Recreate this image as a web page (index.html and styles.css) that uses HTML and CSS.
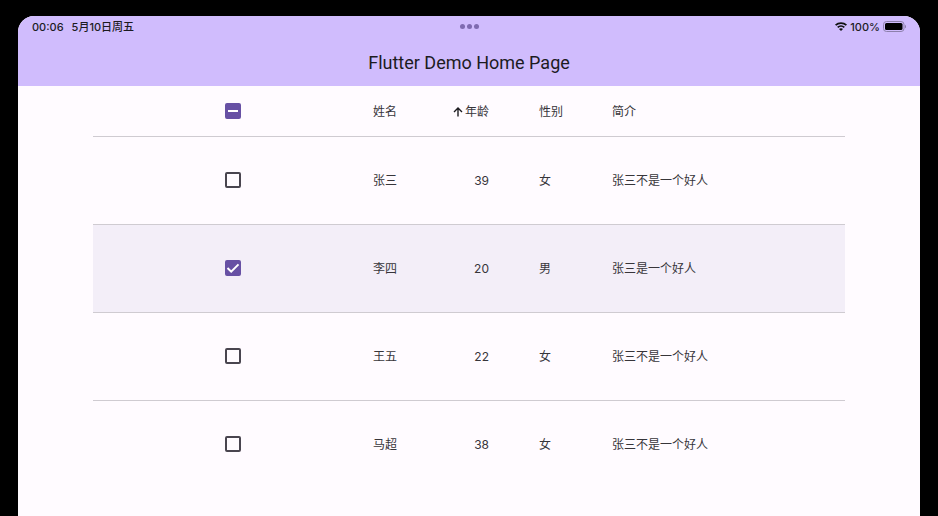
FILE: index.html
```html
<!DOCTYPE html>
<html lang="zh-CN">
<head>
<meta charset="utf-8">
<meta name="viewport" content="width=device-width, initial-scale=1">
<title>Flutter Demo Home Page</title>
<link rel="stylesheet" href="styles.css">
</head>
<body>
<div class="screen">
  <header class="app-bar">
    <div class="status">
      <div class="status-left"><span>00:06</span><span>5月10日周五</span></div>
      <div class="dots"><i></i><i></i><i></i></div>
      <div class="status-right">
        <svg class="wifi" viewBox="0 0 24 18" width="12" height="9" aria-hidden="true">
          <g fill="none" stroke="#111" stroke-width="3.6">
            <path d="M1.2 6.4C7.2 .6 16.800 .6 22.800 6.400"/>
            <path d="M5.400 10.900C9.200 7.400 14.800 7.400 18.600 10.900"/>
          </g>
          <path d="M12 17.800L8 13.800C10.300 11.900 13.700 11.900 16 13.800Z" fill="#111"/>
        </svg>
        <span>100%</span>
        <svg class="battery" viewBox="0 0 24 11" width="24" height="11" aria-hidden="true">
          <rect x=".5" y=".5" width="20.500" height="10" rx="3" fill="none" stroke="#8d80ab"/>
          <rect x="2" y="2" width="17.500" height="7" rx="1.500" fill="#000"/>
          <path d="M22 3.700C23.400 4.200 23.400 6.800 22 7.300Z" fill="#8d80ab"/>
        </svg>
      </div>
    </div>
    <h1>Flutter Demo Home Page</h1>
  </header>
  <main>
    <table>
      <colgroup><col class="c-check"><col class="c-name"><col class="c-age"><col class="c-sex"><col></colgroup>
      <thead>
        <tr>
          <th class="check"><label class="box"><input class="mixed" type="checkbox" aria-label="全选"><svg viewBox="0 0 16 16" aria-hidden="true"><path d="M3 8H13"/></svg></label></th>
          <th>姓名</th>
          <th class="num"><button type="button"><svg viewBox="0 0 10 10" width="10" height="10" aria-hidden="true"><path d="M5 9.500V1M1 5L5 1L9 5"/></svg>年龄</button></th>
          <th>性别</th>
          <th>简介</th>
        </tr>
      </thead>
      <tbody>
        <tr>
          <td class="check"><label class="box"><input type="checkbox" aria-label="选择张三"><svg viewBox="0 0 16 16" aria-hidden="true"><path d="M2.500 8L6.200 11.700L13.500 4.400"/></svg></label></td>
          <td>张三</td><td class="num">39</td><td>女</td><td>张三不是一个好人</td>
        </tr>
        <tr class="selected">
          <td class="check"><label class="box"><input type="checkbox" checked aria-label="选择李四"><svg viewBox="0 0 16 16" aria-hidden="true"><path d="M2.500 8L6.200 11.700L13.500 4.400"/></svg></label></td>
          <td>李四</td><td class="num">20</td><td>男</td><td>张三是一个好人</td>
        </tr>
        <tr>
          <td class="check"><label class="box"><input type="checkbox" aria-label="选择王五"><svg viewBox="0 0 16 16" aria-hidden="true"><path d="M2.500 8L6.200 11.700L13.500 4.400"/></svg></label></td>
          <td>王五</td><td class="num">22</td><td>女</td><td>张三不是一个好人</td>
        </tr>
        <tr>
          <td class="check"><label class="box"><input type="checkbox" aria-label="选择马超"><svg viewBox="0 0 16 16" aria-hidden="true"><path d="M2.500 8L6.200 11.700L13.500 4.400"/></svg></label></td>
          <td>马超</td><td class="num">38</td><td>女</td><td>张三不是一个好人</td>
        </tr>
      </tbody>
    </table>
  </main>
</div>
</body>
</html>
```
FILE: styles.css
```css
* {
  box-sizing: border-box;
}

body {
  margin: 0;
  min-height: 100vh;
  padding: 16px 18px 0;
  display: flex;
  flex-direction: column;
  background: #000;
  color: #1c1b1f;
  font-family: Inter, "Noto Sans CJK SC", sans-serif;
  font-size: 12px;
  line-height: 16px;
}

.screen {
  flex: 1;
  overflow: hidden;
  border-radius: 16px 16px 0 0;
  background: #fffbff;
}

.app-bar {
  padding-bottom: 11px;
  background: #d0bcfd;
}

.status {
  display: grid;
  grid-template-columns: 1fr auto 1fr;
  align-items: center;
  height: 21px;
  padding: 0 13px 0 14px;
  font-size: 11px;
  font-weight: 500;
}

.status-left {
  display: flex;
  gap: 8px;
}

.status-right {
  display: flex;
  justify-content: flex-end;
  align-items: center;
  gap: 3px;
}

.dots {
  display: flex;
  gap: 2px;
}

.dots i {
  width: 5px;
  height: 5px;
  border-radius: 50%;
  background: #7f6bb0;
}

h1 {
  margin: 0;
  padding-top: 14px;
  text-align: center;
  font-family: Roboto, sans-serif;
  font-size: 18px;
  line-height: 24px;
  font-weight: 400;
}

main {
  padding: 0 75px;
}

table {
  width: 100%;
  table-layout: fixed;
  border-collapse: separate;
  border-spacing: 0;
}

.c-check { width: 280px; }
.c-name { width: 75px; }
.c-age { width: 91px; }
.c-sex { width: 73px; }

th,
td {
  padding: 0;
  text-align: left;
  vertical-align: middle;
  font-weight: 400;
  white-space: nowrap;
  color: #37353a;
}

th {
  height: 50px;
  padding-top: 2px;
}

td {
  height: 88px;
  border-top: 1px solid #cfcbd1;
}

.num {
  padding-right: 50px;
  text-align: right;
}

.check {
  padding: 0 0 1px;
  text-align: center;
}

.selected td {
  background: #f3eef8;
}

th button {
  display: inline-flex;
  align-items: center;
  gap: 2px;
  padding: 0;
  border: 0;
  background: none;
  color: inherit;
  font: inherit;
}

th button svg {
  fill: none;
  stroke: #1c1b1f;
  stroke-width: 1.4;
}

.box {
  display: inline-grid;
  vertical-align: middle;
}

.box input,
.box svg {
  grid-area: 1 / 1;
  width: 16px;
  height: 16px;
  margin: 0;
}

.box input {
  appearance: none;
  border: 2px solid #49454f;
  border-radius: 2px;
}

.box input:checked,
.box input.mixed {
  border-color: #6750a4;
  background: #6750a4;
}

.box svg {
  visibility: hidden;
  pointer-events: none;
  fill: none;
  stroke: #fff;
  stroke-width: 2;
}

.box input:checked + svg,
.box input.mixed + svg {
  visibility: visible;
}
```
